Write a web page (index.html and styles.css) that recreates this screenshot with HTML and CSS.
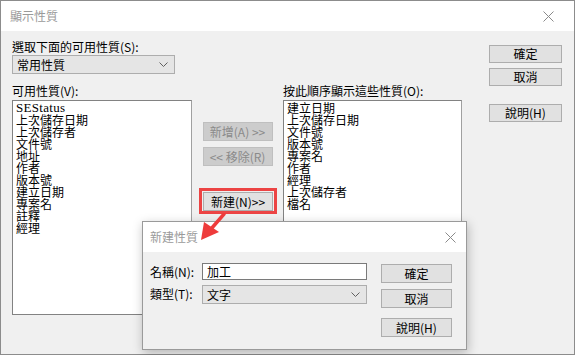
FILE: index.html
```html
<!DOCTYPE html>
<html>
<head>
	<meta charset="utf-8">
	<title>顯示性質</title>
	<link rel="stylesheet" href="styles.css">
</head>
<body>
<div class="win">
	<div class="titlebar">
		<span class="title">顯示性質</span>
		<svg class="close" width="11" height="11" viewBox="0 0 11 11"><path d="M0.5 0.5L10.5 10.5M10.5 0.5L0.5 10.5" stroke="#8a8a8a" stroke-width="1"/></svg>
	</div>
	<div class="content">
		<div class="main">
			<div class="lbl">選取下面的可用性質(S):</div>
			<div class="select wide">
				<span>常用性質</span>
				<svg class="chev" width="9" height="5" viewBox="0 0 9 5"><path d="M0.5 0.5L4.5 4.5L8.5 0.5" fill="none" stroke="#606060"/></svg>
			</div>
			<div class="lists">
				<div class="lbl">可用性質(V):</div>
				<div></div>
				<div class="lbl">按此順序顯示這些性質(O):</div>
				<ul class="listbox">
					<li class="latin">SEStatus</li>
					<li>上次儲存日期</li>
					<li>上次儲存者</li>
					<li>文件號</li>
					<li>地址</li>
					<li>作者</li>
					<li>版本號</li>
					<li>建立日期</li>
					<li>專案名</li>
					<li>註釋</li>
					<li>經理</li>
				</ul>
				<div class="mid">
					<div class="btn off">新增(A) &gt;&gt;</div>
					<div class="btn off">&lt;&lt; 移除(R)</div>
					<div class="mark">
						<div class="btn">新建(N)&gt;&gt;</div>
					</div>
				</div>
				<ul class="listbox">
					<li>建立日期</li>
					<li>上次儲存日期</li>
					<li>文件號</li>
					<li>版本號</li>
					<li>專案名</li>
					<li>作者</li>
					<li>經理</li>
					<li>上次儲存者</li>
					<li>檔名</li>
				</ul>
			</div>
		</div>
		<div class="side">
			<div class="btn">確定</div>
			<div class="btn">取消</div>
			<div class="btn help">說明(H)</div>
		</div>
	</div>

	<!-- 新建性質 -->
	<div class="sub">
		<div class="titlebar sub-title">
			<span class="title">新建性質</span>
			<svg class="close" width="11" height="11" viewBox="0 0 11 11"><path d="M0.5 0.5L10.5 10.5M10.5 0.5L0.5 10.5" stroke="#8a8a8a" stroke-width="1"/></svg>
		</div>
		<div class="sub-body">
			<div class="form">
				<div class="flbl">名稱(N):</div>
				<div class="input">加工</div>
				<div class="flbl">類型(T):</div>
				<div class="select">
					<span>文字</span>
					<svg class="chev" width="9" height="5" viewBox="0 0 9 5"><path d="M0.5 0.5L4.5 4.5L8.5 0.5" fill="none" stroke="#606060"/></svg>
				</div>
			</div>
			<div class="sub-side">
				<div class="btn">確定</div>
				<div class="btn">取消</div>
				<div class="btn help">說明(H)</div>
			</div>
		</div>
	</div>

	<svg class="arrow" width="32" height="32" viewBox="0 0 32 32">
		<path d="M24 1L11 16" stroke="#ee3b3b" stroke-width="3.5" stroke-linecap="round"/>
		<path d="M1 27L4 9L19 19Z" fill="#ee3b3b"/>
	</svg>
</div>
</body>
</html>
```
FILE: styles.css
```css
*{
	margin: 0;
	padding: 0;
	list-style: none;
	box-sizing: border-box;
}
body{
	font-family: "Noto Sans CJK TC", "Noto Sans", sans-serif;
	font-size: 12px;
	color: #000;
	background: #fff;
}
.win{
	width: 575px;
	height: 355px;
	border: 1px solid #8c8c8c;
	background: #f0f0f0;
	position: relative;
	display: flex;
	flex-direction: column;
}
.titlebar{
	height: 30px;
	background: #fff;
	display: flex;
	align-items: center;
	justify-content: space-between;
	padding: 0 20px 0 9px;
	flex-shrink: 0;
}
.title{
	color: #9a9a9a;
	font-size: 12px;
	line-height: 16px;
}
.content{
	flex: 1;
	display: flex;
	padding: 8px 0 0 11px;
}
.main{
	width: 450px;
}
.lbl{
	height: 16px;
	line-height: 16px;
	white-space: nowrap;
}
.select{
	height: 19px;
	background: #e5e5e5;
	border: 1px solid #adadad;
	display: flex;
	align-items: center;
	justify-content: space-between;
	padding: 0 6px 0 4px;
	line-height: 16px;
}
.select.wide{
	width: 163px;
}
.lists{
	margin-top: 9px;
	display: grid;
	grid-template-columns: 180px 91px 179px;
	grid-template-rows: 16px 215px;
	row-gap: 1px;
}
.listbox{
	background: #fff;
	border: 1px solid #828282;
	padding: 1px 3px;
	border-right-color: #a0a0a0;
}
.listbox li{
	line-height: 12px;
	height: 12px;
	font-size: 12px;
	white-space: nowrap;
}
.listbox li.latin{
	font-family: "Liberation Serif", serif;
	font-size: 13px;
	letter-spacing: 0.3px;
}
.mid{
	display: flex;
	flex-direction: column;
	align-items: center;
	padding-top: 22px;
}
.btn{
	width: 70px;
	height: 19px;
	background: #e1e1e1;
	border: 1px solid #adadad;
	text-align: center;
	line-height: 17px;
	white-space: nowrap;
}
.btn.off{
	background: #cccccc;
	border-color: #bfbfbf;
	color: #8a8a8a;
}
.mid .btn.off + .btn.off{
	margin-top: 6px;
}
.mark{
	margin-top: 22px;
	border: 3px solid #ec4444;
	padding: 1px 1px 0 1px;
	margin-left: 1px;
}
.side{
	margin: 6px 0 0 27px;
	display: flex;
	flex-direction: column;
}
.side .btn{
	width: 73px;
	height: 18px;
	line-height: 16px;
	margin-bottom: 5px;
}
.side .btn.help{
	margin-top: 13px;
}
.sub{
	position: absolute;
	left: 141px;
	top: 220px;
	width: 325px;
	height: 129px;
	background: #f0f0f0;
	border: 1px solid #9a9a9a;
	box-shadow: 1px 3px 10px rgba(0,0,0,0.25);
	display: flex;
	flex-direction: column;
}
.sub-title{
	padding: 0 10px 0 7px;
}
.sub-body{
	display: flex;
	padding: 11px 0 0 7px;
}
.form{
	display: grid;
	grid-template-columns: 52px 165px;
	grid-template-rows: 17px 19px;
	row-gap: 5px;
}
.flbl{
	line-height: 17px;
	white-space: nowrap;
}
.input{
	background: #fff;
	border: 1px solid #7a7a7a;
	line-height: 15px;
	padding-left: 4px;
}
.sub-side{
	margin-left: 14px;
	margin-top: 1px;
	display: flex;
	flex-direction: column;
}
.sub-side .btn{
	width: 71px;
	height: 19px;
	margin-bottom: 6px;
}
.sub-side .btn.help{
	margin-top: 4px;
}
.arrow{
	position: absolute;
	left: 199px;
	top: 212px;
}
```
